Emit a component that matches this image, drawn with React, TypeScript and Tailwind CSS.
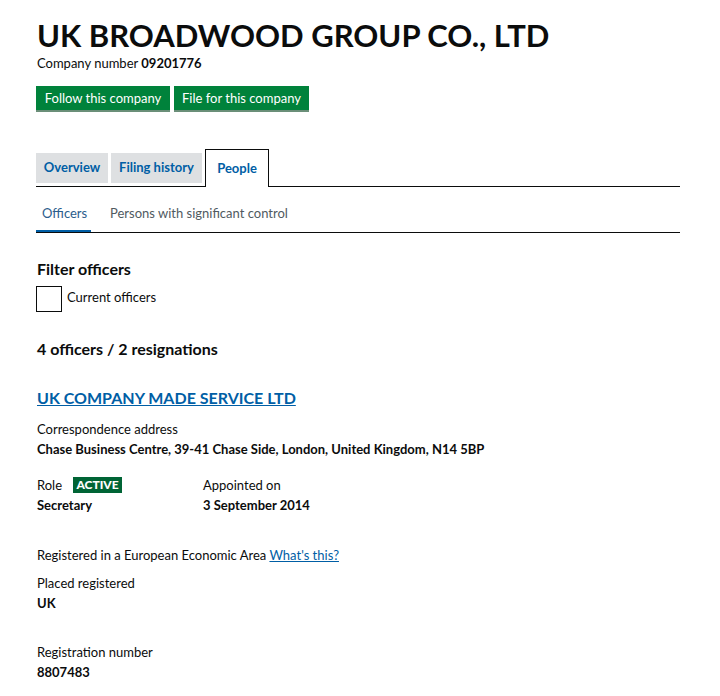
import React from "react";

export default function App() {
  const font = { fontFamily: "Lato, 'Liberation Sans', sans-serif" };
  return (
    <div className="min-h-[696px] bg-white text-[#0b0c0c]" style={font}>
      <div className="pl-[37px] pr-[40px] pt-[15px]">
        <h1 className="text-[31px] leading-[40px] font-bold">UK BROADWOOD GROUP CO., LTD</h1>
        <p className="text-[13px] leading-[16px]">
          Company number <strong className="font-bold">09201776</strong>
        </p>
        <div className="flex gap-[4px] mt-[15px] -ml-[1px]">
          <button className="bg-[#00823b] text-white text-[13px] leading-[16px] h-[24px] w-[134px] shadow-[0_2px_0_#6b8f79]">Follow this company</button>
          <button className="bg-[#00823b] text-white text-[13px] leading-[16px] h-[24px] w-[135px] shadow-[0_2px_0_#6b8f79]">File for this company</button>
        </div>

        <div className="mt-[39px] -ml-[1px] flex items-end border-b border-[#0b0c0c] gap-[3px]">
          <div className="bg-[#dee0e2] h-[30px] mb-[3px] w-[72px] flex items-center justify-center text-[13px] font-bold text-[#005ea5]">Overview</div>
          <div className="bg-[#dee0e2] h-[30px] mb-[3px] w-[91px] flex items-center justify-center text-[13px] font-bold text-[#005ea5]">Filing history</div>
          <div className="bg-white h-[38px] -mb-[1px] w-[64px] border border-b-0 border-[#0b0c0c] flex items-center justify-center text-[13px] font-bold text-[#005ea5]">People</div>
        </div>

        <div className="-ml-[1px] flex border-b border-[#0b0c0c] mt-[18px] text-[13px] leading-[16px]">
          <div className="w-[55px] pl-[6px] pb-[9px] border-b-2 border-[#005ea5] text-[#2b5d8c]">Officers</div>
          <div className="pl-[19px] pb-[9px] text-[#505a5f]">Persons with significant control</div>
        </div>

        <h2 className="text-[16px] font-bold mt-[27px] leading-[18px]">Filter officers</h2>
        <label className="flex items-start gap-[5px] mt-[8px] -ml-[1px]">
          <span className="w-[26px] h-[26px] border border-[#0b0c0c] block"></span>
          <span className="text-[13px] leading-[16px] pt-[3px]">Current officers</span>
        </label>

        <h2 className="text-[16px] font-bold mt-[28px] leading-[18px]">4 officers / 2 resignations</h2>

        <a className="block text-[16px] font-bold mt-[31px] leading-[18px] text-[#005ea5] underline">UK COMPANY MADE SERVICE LTD</a>

        <p className="text-[13px] mt-[14px] leading-[16px]">Correspondence address</p>
        <p className="text-[13px] font-bold mt-[4px] leading-[16px]">Chase Business Centre, 39-41 Chase Side, London, United Kingdom, N14 5BP</p>

        <div className="flex mt-[20px]">
          <div className="w-[166px]">
            <div className="flex items-center gap-[11px] h-[16px]">
              <span className="text-[13px] leading-[16px]">Role</span>
              <span className="bg-[#006435] text-white text-[12px] font-black w-[49px] text-center leading-[16px] h-[16px]">ACTIVE</span>
            </div>
            <p className="text-[13px] font-bold mt-[4px] leading-[16px]">Secretary</p>
          </div>
          <div>
            <p className="text-[13px] leading-[16px]">Appointed on</p>
            <p className="text-[13px] font-bold mt-[4px] leading-[16px]">3 September 2014</p>
          </div>
        </div>

        <p className="text-[13px] mt-[34px] leading-[16px]">
          Registered in a European Economic Area <a className="text-[#005ea5] underline">What's this?</a>
        </p>
        <p className="text-[13px] mt-[12px] leading-[16px]">Placed registered</p>
        <p className="text-[13px] font-bold mt-[4px] leading-[16px]">UK</p>

        <p className="text-[13px] mt-[33px] leading-[16px]">Registration number</p>
        <p className="text-[13px] font-bold mt-[4px] leading-[16px]">8807483</p>
      </div>
    </div>
  );
}
